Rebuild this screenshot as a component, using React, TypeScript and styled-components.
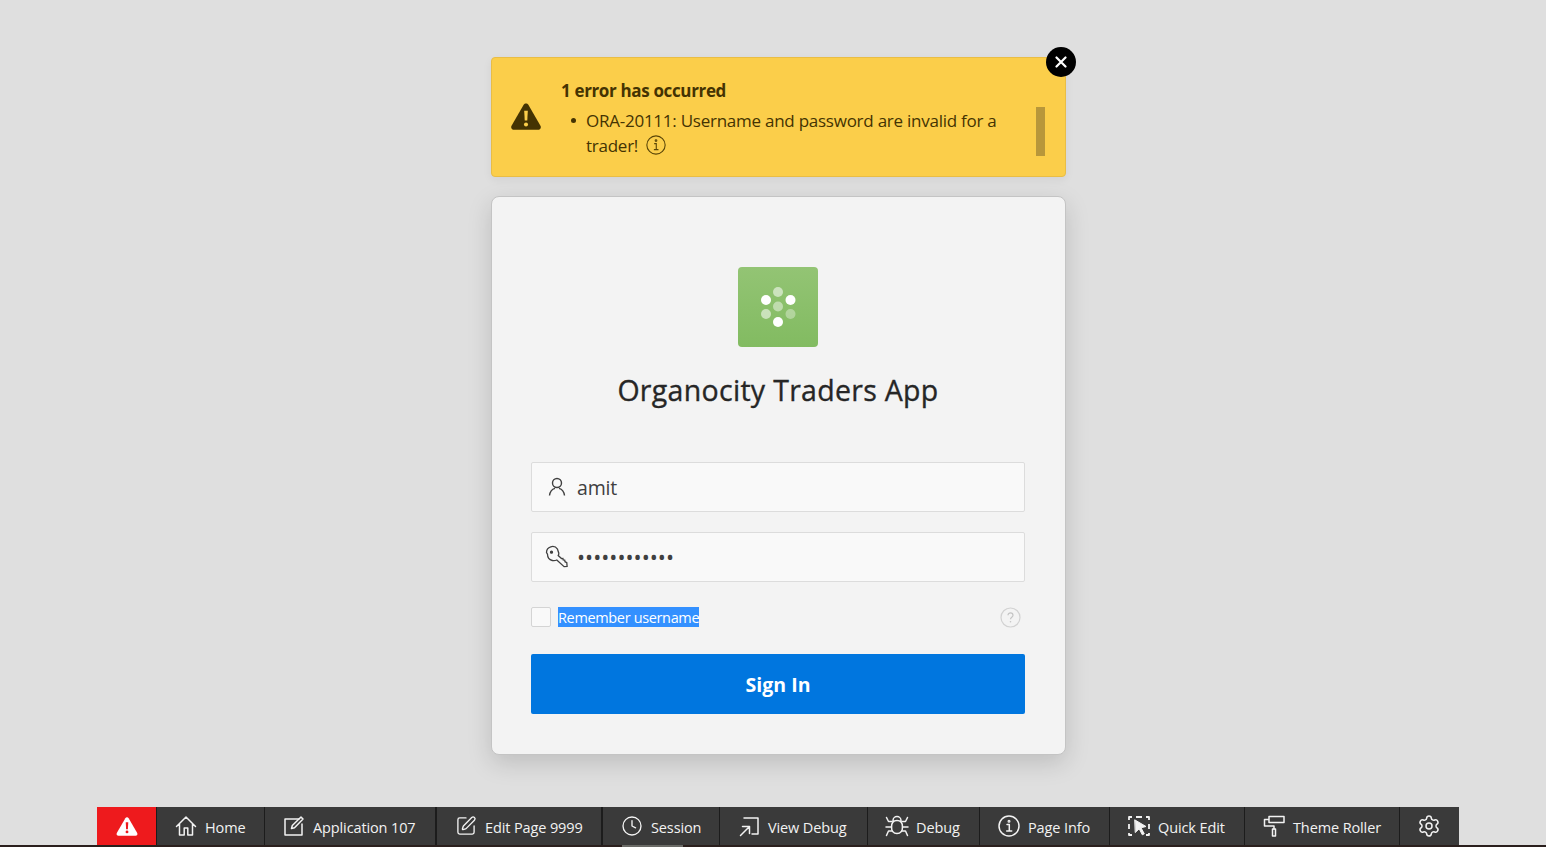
import React from "react";
import styled, { createGlobalStyle } from "styled-components";
import { Clock, Settings, SquarePen } from "lucide-react";

const Global = createGlobalStyle`
  html, body { margin: 0; padding: 0; background: #dfdfdf; }
  body { font-family: "Open Sans", "Noto Sans", "Liberation Sans", sans-serif; overflow: hidden; }
  * { box-sizing: border-box; }
`;

const Page = styled.div`
  height: 847px;
  display: flex;
  flex-direction: column;
  background: #dfdfdf;
  overflow: hidden;
`;
const Main = styled.main`
  flex: 1;
  min-height: 0;
  width: 575px;
  margin-left: 491px;
  padding-top: 57px;
  display: flex;
  flex-direction: column;
  gap: 19px;
`;
const Alert = styled.section`
  position: relative;
  height: 120px;
  background: #fbce4a;
  border: 1px solid #e9bd45;
  border-radius: 4px;
  box-shadow: 0 3px 10px rgba(0, 0, 0, 0.06);
  color: #443302;
  display: flex;
  align-items: center;
  padding: 0 20px 0 17px;
`;
const AlertIcon = styled.svg`
  width: 34px;
  height: 34px;
  flex: none;
  fill: #443302;
  margin-bottom: 3px;
`;
const AlertBody = styled.div`
  flex: 1;
  padding-left: 18px;
  padding-top: 8px;
  height: 100%;
`;
const AlertTitle = styled.h2`
  margin: 13px 0 5px;
  font-size: 17px;
  line-height: 24px;
  font-weight: 700;
  letter-spacing: -0.35px;
`;
const AlertList = styled.ul`
  margin: 0;
  padding: 0 0 0 25px;
  list-style: none;
  position: relative;
  width: 450px;
`;
const AlertItem = styled.li`
  font-size: 17px;
  line-height: 25px;
  letter-spacing: -0.25px;
  &::before {
    content: "";
    position: absolute;
    left: 10px;
    top: 10px;
    width: 5px;
    height: 5px;
    border-radius: 50%;
    background: #443302;
  }
`;
const InlineInfo = styled.svg`
  width: 22px;
  height: 22px;
  margin-left: 7px;
  vertical-align: -4px;
  stroke: #5a4608;
  fill: none;
`;
const ScrollThumb = styled.div`
  width: 9px;
  height: 49px;
  background: #b8973a;
  flex: none;
  margin-top: 29px;
`;
const Close = styled.button`
  position: absolute;
  top: -11px;
  right: -11px;
  width: 30px;
  height: 30px;
  border: 0;
  padding: 0;
  border-radius: 50%;
  background: #000;
  display: flex;
  align-items: center;
  justify-content: center;
`;
const Card = styled.section`
  height: 559px;
  background: #f3f3f3;
  border: 1px solid #c4c4c4;
  border-radius: 8px;
  box-shadow: 0 8px 24px rgba(0, 0, 0, 0.15);
  padding: 70px 40px 0 39px;
  display: flex;
  flex-direction: column;
`;
const Logo = styled.div`
  width: 80px;
  height: 80px;
  align-self: center;
  border-radius: 4px;
  background: linear-gradient(#93c474, #82bb61);
  display: flex;
  align-items: center;
  justify-content: center;
`;
const Title = styled.h1`
  margin: 25px 0 54px;
  text-align: center;
  font-size: 28.5px;
  line-height: 36px;
  font-weight: 500;
  color: #262626;
  letter-spacing: 0.3px;
  -webkit-text-stroke: 0.35px #262626;
`;
const Field = styled.label`
  height: 50px;
  background: #f9f9f9;
  border: 1px solid #dcdcdc;
  border-radius: 2px;
  display: flex;
  align-items: center;
  padding-left: 13px;
  margin-bottom: 20px;
  color: #404040;
`;
const FieldIcon = styled.svg`
  width: 24px;
  height: 24px;
  flex: none;
  stroke: #404040;
  fill: none;
`;
const FieldInput = styled.input`
  flex: 1;
  min-width: 0;
  border: 0;
  outline: 0;
  background: transparent;
  margin-left: 8px;
  padding: 2px 0 0;
  font: 400 19.5px/26px "Open Sans", sans-serif;
  letter-spacing: -0.2px;
  color: #404040;
`;
const PasswordInput = styled(FieldInput)`
  letter-spacing: 0;
  font-size: 21.5px;
  padding: 0;
`;
const RememberRow = styled.div`
  height: 20px;
  margin-top: 5px;
  display: flex;
  align-items: center;
  position: relative;
`;
const Check = styled.span`
  width: 20px;
  height: 20px;
  border: 1px solid #d4d4d4;
  border-radius: 2px;
  background: #f9f9f9;
  flex: none;
`;
const RememberLabel = styled.span`
  margin-left: 7px;
  height: 20px;
  background: #3390ff;
  color: #fff;
  font-size: 14.5px;
  line-height: 21px;
  letter-spacing: -0.35px;
  white-space: nowrap;
`;
const Help = styled.svg`
  margin-left: auto;
  margin-right: 4px;
  width: 21px;
  height: 21px;
`;
const SignIn = styled.button`
  margin-top: 27px;
  height: 60px;
  border: 0;
  border-radius: 2px;
  background: #0076df;
  color: #fff;
  padding: 2px 0 0;
  font: 700 19.5px/26px "Open Sans", sans-serif;
  letter-spacing: 0.05px;
`;
const Toolbar = styled.nav`
  height: 38px;
  margin-left: 97px;
  width: 1362px;
  display: flex;
  background: #3a3a3a;
  color: #f2f2f2;
  flex: none;
`;
const ErrorTab = styled.div`
  width: 60px;
  flex: none;
  background: #ee1a1d;
  border-right: 1px solid #1c1c1c;
  display: flex;
  align-items: center;
  justify-content: center;
`;
const Item = styled.div<{ $w: number; $sep?: number }>`
  width: ${(p) => p.$w}px;
  flex: none;
  border-right: ${(p) => p.$sep ?? 1}px solid #1c1c1c;
  display: flex;
  align-items: center;
  gap: 7px;
  padding-left: 17px;
  font-size: 14.5px;
  letter-spacing: -0.12px;
  white-space: nowrap;
`;
const ItemLabel = styled.span`
  padding-top: 2px;
`;
const ToolIcon = styled.svg`
  width: 24px;
  height: 24px;
  flex: none;
  fill: none;
  stroke: #f2f2f2;
  stroke-width: 1.5;
  stroke-linecap: round;
  stroke-linejoin: round;
`;
const SmallToolIcon = styled(ToolIcon)`
  transform: scale(0.9);
`;
const Bottom = styled.div`
  height: 2px;
  flex: none;
  background: #2a1f1d;
  position: relative;
`;
const BottomMark = styled.span`
  position: absolute;
  left: 622px;
  top: 0;
  width: 61px;
  height: 2px;
  background: #6a6a66;
`;

const Warn = ({ color = "#443302", bang = "#fbce4a" }: { color?: string; bang?: string }) => (
  <>
    <path d="M16 4.2c-.9 0-1.7.5-2.2 1.3L2.4 25.2c-1 1.8.3 3.8 2.2 3.8h22.8c2 0 3.2-2 2.2-3.8L18.2 5.5c-.5-.8-1.3-1.3-2.2-1.3z" fill={color} />
    <path d="M14.3 11h3.4l-.5 9.2h-2.4z" fill={bang} />
    <circle cx="16" cy="23.9" r="1.9" fill={bang} />
  </>
);

const SerifInfo = ({ w = 1.5 }: { w?: number }) => (
  <>
    <circle cx="12" cy="12" r="10" strokeWidth={w} />
    <path d="M10 10.500h2.300v6.500M9.700 17h5" strokeWidth={w} />
    <circle cx="12" cy="7.200" r="0.900" strokeWidth="1.200" />
  </>
);

const tools = [
  {
    label: "Home",
    w: 108,
    icon: (
      <ToolIcon viewBox="0 0 24 24">
        <path d="M2.500 12.500 12 3l9.500 9.500M5.500 10v11h4.700v-7h3.600v7h4.700V10" />
      </ToolIcon>
    ),
  },
  {
    label: "Application 107",
    w: 172,
    sep: 2,
    icon: (
      <ToolIcon viewBox="0 0 24 24">
        <path d="M17 5H3v16h17V10" />
        <path d="m9.500 14.500.8-3L19 3l2 2-8.500 8.700z" />
      </ToolIcon>
    ),
  },
  {
    label: "Edit Page 9999",
    w: 166,
    sep: 2,
    icon: <SmallToolIcon as={SquarePen} strokeWidth={1.6} />,
  },
  {
    label: "Session",
    w: 117,
    icon: <SmallToolIcon as={Clock} strokeWidth={1.6} />,
  },
  {
    label: "View Debug",
    w: 148,
    icon: (
      <ToolIcon viewBox="0 0 24 24">
        <path d="M7 4h14v16h-6" />
        <path d="M3.500 21.500 12 13M5.500 12.500H12.500V19.500" />
      </ToolIcon>
    ),
  },
  {
    label: "Debug",
    w: 112,
    icon: (
      <ToolIcon viewBox="0 0 24 24">
        <path d="M12 6.500c3.500 0 5.500 2.700 5.500 6.500s-2 6.500-5.500 6.500-5.500-2.700-5.500-6.500S8.500 6.500 12 6.500zM8 8V6.500a4 4 0 0 1 8 0V8" />
        <path d="M1.500 3.500 3.500 7.500H7M22.500 3.500 20.500 7.500H17M1 13H6.500M23 13H17.500M1.500 21.500l2-4.500H7M22.500 21.500l-2-4.500H17" />
      </ToolIcon>
    ),
  },
  {
    label: "Page Info",
    w: 130,
    icon: (
      <ToolIcon viewBox="0 0 24 24">
        <SerifInfo />
      </ToolIcon>
    ),
  },
  {
    label: "Quick Edit",
    w: 135,
    icon: (
      <ToolIcon viewBox="0 0 24 24">
        <path d="M5 3H2v3M9 3h6M19 3h3v3M2 10v5M22 10v5M2 19v2h3M19 21h3v-2" strokeWidth="1.800" strokeLinecap="butt" />
        <path d="m8 6 11 6.500-5 1.300 3.300 6-2 1-3.100-6-3.700 3.500z" fill="#f2f2f2" strokeWidth="1" />
      </ToolIcon>
    ),
  },
  {
    label: "Theme Roller",
    w: 155,
    icon: (
      <ToolIcon viewBox="0 0 24 24">
        <path d="M7 2.500h15v6H7zM7 5.500H2.500v6.500H12v3" />
        <path d="M10.500 15h3v7h-3z" />
      </ToolIcon>
    ),
  },
  {
    label: "",
    w: 60,
    sep: 0,
    icon: <ToolIcon as={Settings} strokeWidth={1.5} />,
  },
];

export default function App() {
  return (
    <Page>
      <Global />
      <Main>
        <Alert>
          <AlertIcon viewBox="0 0 32 32">
            <Warn />
          </AlertIcon>
          <AlertBody>
            <AlertTitle>1 error has occurred</AlertTitle>
            <AlertList>
              <AlertItem>
                ORA-20111: Username and password are invalid for a trader!
                <InlineInfo viewBox="0 0 24 24">
                  <SerifInfo w={1.2} />
                </InlineInfo>
              </AlertItem>
            </AlertList>
          </AlertBody>
          <ScrollThumb />
          <Close aria-label="Close">
            <svg width="12" height="12" viewBox="0 0 12 12">
              <path d="M1.500 1.500l9 9M10.500 1.500l-9 9" stroke="#fff" strokeWidth="2.200" strokeLinecap="round" />
            </svg>
          </Close>
        </Alert>
        <Card>
          <Logo>
            <svg width="40" height="44" viewBox="0 0 40 44">
              <circle cx="20" cy="7" r="5" fill="#fff" opacity="0.55" />
              <circle cx="8" cy="15" r="5" fill="#fff" />
              <circle cx="32.500" cy="15" r="5" fill="#fff" />
              <circle cx="20" cy="21.500" r="5" fill="#fff" opacity="0.45" />
              <circle cx="8" cy="29" r="5" fill="#fff" opacity="0.55" />
              <circle cx="32.500" cy="29" r="5" fill="#fff" opacity="0.35" />
              <circle cx="20" cy="37" r="5" fill="#fff" />
            </svg>
          </Logo>
          <Title>Organocity Traders App</Title>
          <Field>
            <FieldIcon viewBox="0 0 24 24" strokeWidth="1.400">
              <circle cx="12" cy="8" r="4.500" />
              <path d="M4.500 20.500c.5-4.500 3-6.500 5.500-7.200M19.500 20.500c-.5-4.500-3-6.500-5.500-7.200" />
            </FieldIcon>
            <FieldInput readOnly value="amit" />
          </Field>
          <Field>
            <FieldIcon viewBox="0 0 24 24" strokeWidth="1.300">
              <path d="M1.500 7.500a6 6 0 0 1 11-3.300l1.300 4c0 1-.2 1.700-.6 2.400l3.300 3 1.400-.2.300 1.500 1.500.1.300 1.700 1.800.9.300 3.900-3 .2-7.300-6.700c-1.500.7-3 .9-4.500.5-2.800-.8-4.800-3.300-4.800-6.300z" />
              <circle cx="6.500" cy="7.200" r="1" fill="#404040" />
            </FieldIcon>
            <PasswordInput readOnly type="password" value="amit12345678" />
          </Field>
          <RememberRow>
            <Check />
            <RememberLabel>Remember username</RememberLabel>
            <Help viewBox="0 0 21 21">
              <circle cx="10.500" cy="10.500" r="9.500" fill="none" stroke="#d2d2d2" strokeWidth="1.200" />
              <path d="M8 8.300c0-3.200 5-3.200 5 0 0 2-2.500 1.900-2.500 4" fill="none" stroke="#c4c4c4" strokeWidth="1.200" />
              <circle cx="10.500" cy="14.800" r="0.800" fill="#c4c4c4" />
            </Help>
          </RememberRow>
          <SignIn>Sign In</SignIn>
        </Card>
      </Main>
      <Toolbar>
        <ErrorTab>
          <svg width="24" height="24" viewBox="0 0 32 32">
            <Warn color="#fff" bang="#ee1a1d" />
          </svg>
        </ErrorTab>
        {tools.map((t) => (
          <Item key={t.label || "settings"} $w={t.w} $sep={t.sep}>
            {t.icon}
            {t.label && <ItemLabel>{t.label}</ItemLabel>}
          </Item>
        ))}
      </Toolbar>
      <Bottom>
        <BottomMark />
      </Bottom>
    </Page>
  );
}
